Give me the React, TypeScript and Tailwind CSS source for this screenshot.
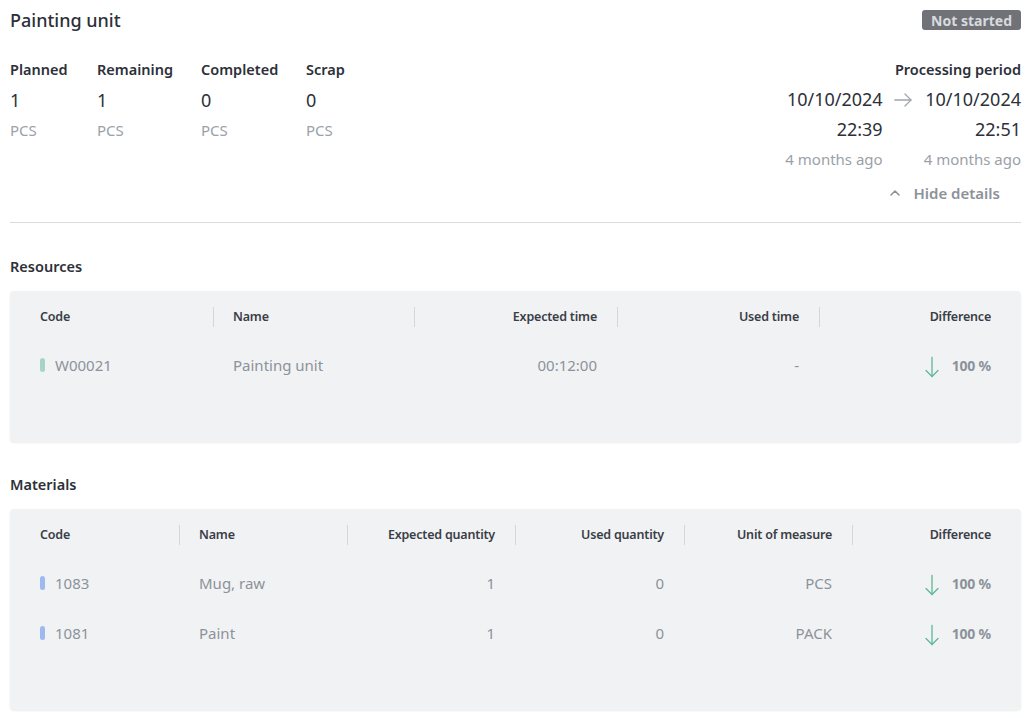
import { ChevronUp } from 'lucide-react';

// Ligne de tableau générique : une liste de colonnes avec largeur et alignement
type Col = { label: string; width: string; align: 'left' | 'right' };

const resourceCols: Col[] = [
  { label: 'Code', width: 'w-[193px]', align: 'left' },
  { label: 'Name', width: 'w-[201px]', align: 'left' },
  { label: 'Expected time', width: 'w-[203px]', align: 'right' },
  { label: 'Used time', width: 'w-[202px]', align: 'right' },
  { label: 'Difference', width: 'flex-1', align: 'right' },
];

const materialCols: Col[] = [
  { label: 'Code', width: 'w-[159px]', align: 'left' },
  { label: 'Name', width: 'w-[168px]', align: 'left' },
  { label: 'Expected quantity', width: 'w-[168px]', align: 'right' },
  { label: 'Used quantity', width: 'w-[169px]', align: 'right' },
  { label: 'Unit of measure', width: 'w-[168px]', align: 'right' },
  { label: 'Difference', width: 'flex-1', align: 'right' },
];

const resources = [{ code: 'W00021', cells: ['Painting unit', '00:12:00', '-'] }];
const materials = [
  { code: '1083', cells: ['Mug, raw', '1', '0', 'PCS'] },
  { code: '1081', cells: ['Paint', '1', '0', 'PACK'] },
];

function Stat({ label, value }: { label: string; value: string }) {
  return (
    <div className="flex flex-col">
      <div className="h-[30px] flex items-center text-[14.5px] font-semibold text-[#2d3039]">{label}</div>
      <div className="h-[30px] flex items-center text-[18px] text-[#2d3039]">{value}</div>
      <div className="h-[30px] flex items-center text-[15px] text-[#9ba1a8]">PCS</div>
    </div>
  );
}

// Flèche fine vers le bas (écart négatif)
function ThinArrowDown() {
  return (
    <svg viewBox="0 0 14 22" className="w-[14px] h-[22px] text-[#5db894] mt-[4px]" fill="none" stroke="currentColor" strokeWidth={1.3} strokeLinecap="round" strokeLinejoin="round">
      <path d="M7 1.5V20.5" />
      <path d="M1 14.5L7 20.5L13 14.5" />
    </svg>
  );
}

function ThinArrowRight() {
  return (
    <svg viewBox="0 0 18 14" className="w-[18px] h-[14px] text-[#a0a5ab]" fill="none" stroke="currentColor" strokeWidth={1.3} strokeLinecap="round" strokeLinejoin="round">
      <path d="M0.8 7H17" />
      <path d="M11 1L17 7L11 13" />
    </svg>
  );
}

function Difference() {
  return (
    <div className="flex items-center justify-end gap-[13px]">
      <ThinArrowDown />
      <span className="text-[14px] font-bold text-[#8c929a] tracking-[-0.2px]">100 %</span>
    </div>
  );
}

function Table({
  cols,
  rows,
  indicator,
}: {
  cols: Col[];
  rows: { code: string; cells: string[] }[];
  indicator: string;
}) {
  return (
    <div className="bg-[#f1f2f4] rounded-[4px] shadow-[0_1px_2px_rgba(0,0,0,0.08)] px-[10px] pt-[10px] pb-[52px]">
      <div className="flex h-[32px] items-center">
        {cols.map((col, i) => (
          <div
            key={col.label}
            className={`${col.width} relative h-full flex items-center px-[20px] text-[12.5px] tracking-[-0.2px] font-semibold text-[#3a3e46] ${
              col.align === 'right' ? 'justify-end' : 'justify-start'
            }`}
          >
            {i > 0 && <span className="absolute left-0 top-[6px] h-[20px] w-px bg-[#d3d6da]" />}
            {col.label}
          </div>
        ))}
      </div>
      <div className="mt-[7px]">
        {rows.map((row) => (
          <div key={row.code} className="flex h-[50px] items-center text-[15px] text-[#8c929a]">
            {cols.map((col, i) => {
              const base = `${col.width} px-[20px] flex items-center ${
                col.align === 'right' ? 'justify-end' : 'justify-start'
              }`;
              if (i === 0) {
                return (
                  <div key={col.label} className={`${base} gap-[10px]`}>
                    <span className={`w-[5px] h-[14px] rounded-full ${indicator}`} />
                    {row.code}
                  </div>
                );
              }
              if (i === cols.length - 1) {
                return (
                  <div key={col.label} className={base}>
                    <Difference />
                  </div>
                );
              }
              return (
                <div key={col.label} className={base}>
                  {row.cells[i - 1]}
                </div>
              );
            })}
          </div>
        ))}
      </div>
    </div>
  );
}

export default function App() {
  return (
    <div className="min-h-screen bg-white px-[10px] pt-[9px] font-['Noto_Sans',sans-serif] w-[1033px]">
      <div className="w-[1011px]">
        <div className="flex items-center justify-between h-[22px]">
          <h1 className="text-[18px] font-medium text-[#2d3039]">Painting unit</h1>
          <span className="h-[20px] px-[9px] flex items-center rounded-[3px] bg-[#707278] text-[14px] font-bold text-[#d8dade]">
            Not started
          </span>
        </div>

        <div className="mt-[24px] flex justify-between">
          <div className="flex">
            <div className="w-[87px]"><Stat label="Planned" value="1" /></div>
            <div className="w-[104px]"><Stat label="Remaining" value="1" /></div>
            <div className="w-[105px]"><Stat label="Completed" value="0" /></div>
            <div><Stat label="Scrap" value="0" /></div>
          </div>

          <div className="flex flex-col items-end">
            <div className="h-[30px] flex items-center text-[14.5px] font-semibold text-[#2d3039]">Processing period</div>
            <div className="flex">
              <div className="flex flex-col items-end">
                <div className="h-[29px] flex items-center text-[18px] text-[#2d3039]">10/10/2024</div>
                <div className="h-[31px] flex items-center text-[18px] text-[#2d3039]">22:39</div>
                <div className="h-[28px] flex items-center text-[15px] text-[#9ba1a8]">4 months ago</div>
              </div>
              <div className="h-[29px] w-[41px] flex items-center justify-center">
                <ThinArrowRight />
              </div>
              <div className="flex flex-col items-end">
                <div className="h-[29px] flex items-center text-[18px] text-[#2d3039]">10/10/2024</div>
                <div className="h-[31px] flex items-center text-[18px] text-[#2d3039]">22:51</div>
                <div className="h-[28px] flex items-center text-[15px] text-[#9ba1a8]">4 months ago</div>
              </div>
            </div>
            <div className="mt-[7px] mr-[21px] h-[26px] flex items-center gap-[10px] text-[15px] font-semibold text-[#8c929a]">
              <ChevronUp className="w-[16px] h-[16px] text-[#8c929a]" strokeWidth={2.4} />
              Hide details
            </div>
          </div>
        </div>

        <div className="mt-[16px] h-px bg-[#d9dbde]" />

        <div className="mt-[32px] h-[24px] flex items-center text-[14.5px] font-semibold text-[#2d3039]">Resources</div>
        <div className="mt-[12px]">
          <Table cols={resourceCols} rows={resources} indicator="bg-[#a6d6c3]" />
        </div>

        <div className="mt-[31px] h-[24px] flex items-center text-[14.5px] font-semibold text-[#2d3039]">Materials</div>
        <div className="mt-[12px]">
          <Table cols={materialCols} rows={materials} indicator="bg-[#9dbaf0]" />
        </div>
      </div>
    </div>
  );
}
